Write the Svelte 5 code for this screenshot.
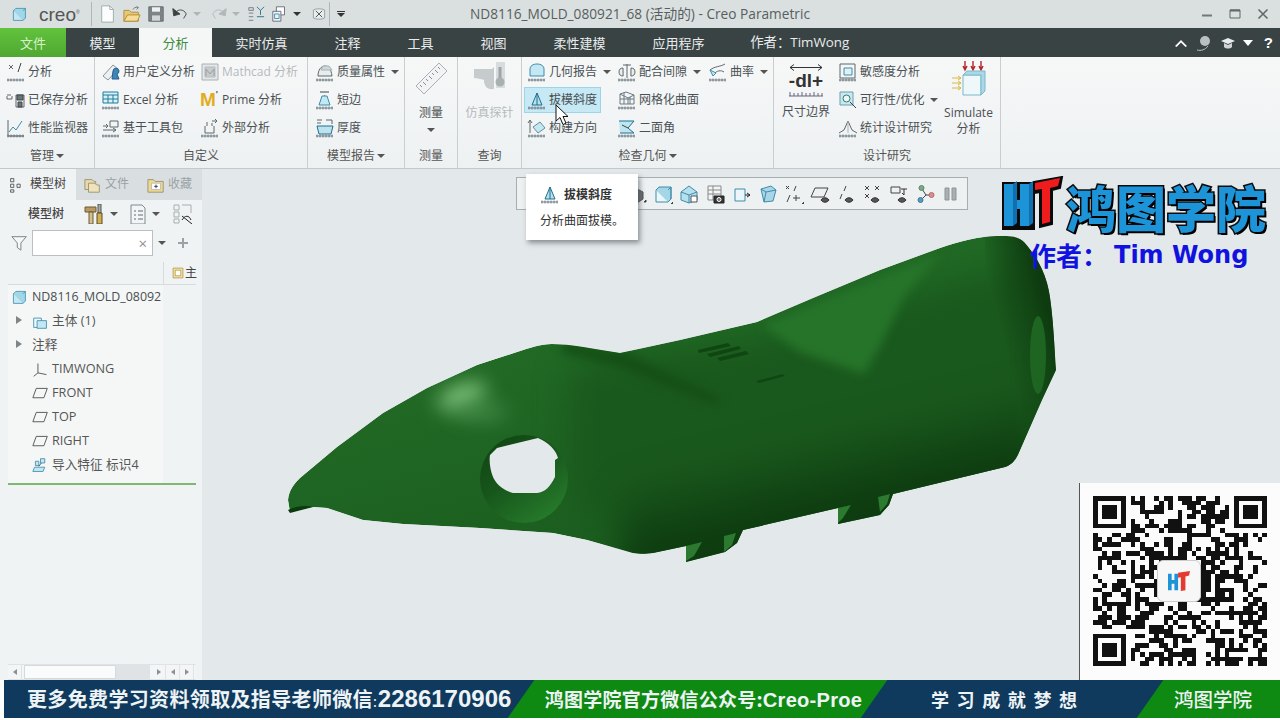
<script>
  const R = ['M1 18h17M2 16.5v3M5 16.5v3M8 16.5v3M11 16.5v3M14 16.5v3M17 16.5v3', '#6f7c82', 'none'];
  const G = '#5f676b', B = '#3f8cab', L = '#c4e8f3', D = '#3c4447';
  const icons = {
    analysis: [['M3 3l4 4M7 3l-4 4', G, 'none'], ['M15 1l-3 9', D, 'none'], R],
    saved: [['M1 6v3h5V6M2 6V4M4 6V4M10 5h8v12h-8z', G, 'none'], ['M11 5h6v5h-6zM12 12h4v5h-4z', D, '#6b7478']],
    perf: [['M2 2v16h16', G, 'none'], ['M3 14l4-5 3 3 6-9', B, 'none'], R],
    userdef: [['M2 14l10-11 5 4-10 11z', '#8b9499', '#eef1f2'], ['M12 9a3 3 0 1 1 4 3l2 5h-7z', '#235f8e', '#3f85b8']],
    mathcad: [['M2 2h16v16H2z', '#aab0b3', '#e4e7e8'], ['M5 5h10v10H5z', '#b7bcbf', '#c7cbcd'], ['M6 14V7l4 5 4-5v7', '#999fa2', 'none']],
    excel: [['M2 2h15v11H2z', '#1f7d9c', '#d8f0f6'], ['M2 5h15M7 5v8M12 5v8M2 9h15', '#1f7d9c', 'none'], R],
    toolkit: [['M9 3h8v6h-8zM2 8h5M2 12h13', G, 'none'], ['M5 6l2 2-2 2M12 10l3 2-3 2', G, 'none'], R],
    external: [['M5 8v7h9V8M7 8V4M12 8V5', G, 'none'], ['M12 3h5M15 1l2 2-2 2', G, 'none'], R],
    mass: [['M3 14c0-6 3-10 7-10s6 3 7 10z', G, '#e7ecee'], ['M8 4h6l3 4H6z', '#a8b4b9', '#cfd8db'], R],
    short: [['M5 2h9M9 6h1', D, 'none'], ['M7 6h5l3 9H4z', B, L], R],
    thick: [['M2 2h5M2 5h4M11 2h6v4', G, 'none'], ['M2 8h16l-2 8H4z', '#1f6f8f', '#bce2ee'], R],
    geo: [['M3 14V7c0-3 3-5 7-5s7 2 7 5v7z', B, L], R],
    clear: [['M6 3h8M10 2v14', G, 'none'], ['M6 6a4 4 0 1 0 .1 8zM14 6a4 4 0 1 1-.1 8z', G, '#e9eeef'], R],
    curve: [['M2 8c5-4 10-3 15-6M5 13c4-5 8-5 11-3', G, 'none'], ['M2 8l6 3-3 3z', B, L], R],
    draft: [['M10 3l5 12H5z', '#1f6f8f', '#b8dfec'], ['M10 3v12', '#1f6f8f', 'none'], R],
    mesh: [['M3 4l6-2 8 3-6 3zM3 4v10h8V8M17 5v9h-6M7 3v11M13 7v7M3 9h14', '#6b7a80', 'none'], R],
    direction: [['M3 15V3M1 5l2-3 2 3', G, 'none'], ['M6 9l7-5 5 6-7 5z', '#6a8d9a', L], R],
    dihedral: [['M2 3h15l-6 7 6 5H3', '#1f6f8f', '#bfe5f0'], ['M5 7l6 3', D, 'none'], R],
    sens: [['M2 2h15v14H2z', G, '#f4f6f6'], ['M6 6h8v7H6z', B, '#e0f0f5'], R],
    feas: [['M2 2h13v13H2z', '#6d9cad', '#c9e8f2'], ['M12 12l6 6', D, 'none'], ['M5 8.5a3.5 3.5 0 1 0 7 0a3.5 3.5 0 1 0-7 0', '#2e7f6d', '#eef6f7']],
    stat: [['M1 15l5-3 4-9 4 9 5 3', G, 'none'], ['M10 3v12', '#a9b3b7', 'none'], R],
    tree: [['M2 2h4v4H2zM2 9h4v4H2zM2 16h4v3H2zM10 9h4v4h-4z', D, 'none']],
    box: [['M3 6h12v12H3z', B, L], ['M3 6l3-3h12v12l-3 3M15 6l3-3', B, '#9fd6e8']],
    boxes: [['M2 6h9v11H2z', B, '#eef8fb'], ['M6 9h11v9H6z', B, L]],
    csys: [['M7 3v11l-5 4M7 14l10 2', '#444', 'none']],
    plane: [['M5 4h13l-4 11H1z', '#444', 'none']],
    imp: [['M10 2h5v5h-5zM4 5h4v5H4z', B, L], ['M3 12h12l-2 5H1z', B, L], ['M11 7l-3 4', D, 'none']],
    hammer: [['M3 3h11v5H3z', '#6b5a33', '#b89a62'], ['M7 8h4v12H7z', '#6b5a33', '#d6bf8c']],
    driver: [['M4 0h3v9H4z', '#555', '#aaa'], ['M3 9h5v11H3z', '#5a4a20', '#cfae55']],
    list: [['M3 1h11l3 3v16H3z', '#7f8a8f', '#f2f5f6'], ['M6 7h2M10 7h5M6 11h2M10 11h5M6 15h2M10 15h5', '#667', 'none']],
    eyeTree: [['M1 1h5v5H1zM1 8h5v5H1zM1 15h5v4H1zM9 1h9v8', '#a6adb0', 'none'], ['M9 12l10 8M9 16c3-5 7-5 9 0', '#222', 'none']],
    funnel: [['M1 3h16l-6 7v8l-4-3v-5z', '#777', '#f5f7f8']],
    folders: [['M1 4h8l2 2h2v9H1z', '#9a9076', '#e8d9a8'], ['M5 8h7l2 2h3v8H5z', '#9a9076', '#efe3bd']],
    fav: [['M1 4h6l2 2h9v12H1z', '#9a9076', '#ecd98f'], ['M5 8h10v7H5z', '#bbb', '#fff'], ['M8 11.5h4M10 9.5v4', '#333', 'none']],
    frame: [['M3 3h14v14H3z', '#a88a2c', '#f5e7ae'], ['M6 6h8v8H6z', '#a88a2c', '#fff']],
    tbDark: [['M3 8l7-3 6 3v7l-6 4-7-3z', '#555', '#6a7074'], ['M17 18h2v-2z', '#444', '#444']],
    tbBox: [['M3 6h12v12H3z', B, '#eaf6fa'], ['M3 6l3-3h12v12l-3 3M15 6l3-3v12', B, '#a5d6e6'], ['M18 20h2v-2z', '#444', '#444']],
    tbHouse: [['M2 8l8-6 8 6v8l-8 3-8-3z', B, '#b7e0ed'], ['M2 8l8 3 8-3M10 11v8', B, 'none'], ['M12 12h6v6h-6z', '#555', '#fff']],
    tbCam: [['M3 2h13v14H3zM3 6h13M3 10h13M8 2v14', '#888', '#f2f4f5'], ['M9 12h10v7H9z', '#222', '#333'], ['M12 15.5a2 2 0 1 0 4 0a2 2 0 1 0-4 0', '#fff', '#777']],
    tbOrient: [['M3 5h10v12H3z', B, '#eaf6fa'], ['M13 11h5M15 9l3 2-3 2', '#222', 'none']],
    tbCube: [['M3 5l10-3 5 4-3 11-9 1z', B, '#a9d6e6'], ['M3 5l5 3 10-2M8 8l-2 10', B, 'none']],
    tbPts: [['M2 2l3 3M5 2L2 5M12 2l-2 5M6 11l-3 7M9 14h7M12 11v6', '#444', 'none'], ['M18 20h2v-2z', '#444', '#444']],
    tbPlane: [['M5 4h13l-4 9H1z', '#444', 'none'], ['M11 16c2-3 6-3 8 0c-2 3-6 3-8 0z', '#333', '#555']],
    tbAxis: [['M10 2l-2 5M6 10l-2 5', '#444', 'none'], ['M9 16c2-3 6-3 8 0c-2 3-6 3-8 0z', '#333', '#555']],
    tbX: [['M3 2l4 4M7 2L3 6M13 2l4 4M17 2l-4 4M3 10l4 4M7 10l-4 4', '#444', 'none'], ['M9 16c2-3 6-3 8 0c-2 3-6 3-8 0z', '#333', '#555']],
    tbCsys: [['M2 3h9v6H2z', '#444', 'none'], ['M12 5h6M15 5v6l-2-2', '#333', 'none'], ['M9 16c2-3 6-3 8 0c-2 3-6 3-8 0z', '#333', '#555']],
    tbNodes: [['M7 5l4 6-5 5M11 11h6', '#444', 'none'], ['M4 4a2.5 2.5 0 1 0 5 0a2.5 2.5 0 1 0-5 0', '#5a8a6a', '#7fa98a'], ['M14 11a2.5 2.5 0 1 0 5 0a2.5 2.5 0 1 0-5 0', '#b86a6a', '#d98f8f'], ['M3 16a2.5 2.5 0 1 0 5 0a2.5 2.5 0 1 0-5 0', '#3d7a9a', '#5a9abb']],
    tbPause: [['M4 4h4v12H4zM11 4h4v12h-4z', '#8d9599', '#a9b0b4']],
    qaNew: [['M3 1h9l4 4v14H3z', '#9aa', '#fdfdfd'], ['M12 1v4h4', '#9aa', 'none']],
    qaOpen: [['M1 6h6l2 2h8v10H1z', '#b08a30', '#e8c878'], ['M5 11h14l-3 7H1z', '#b08a30', '#f4dc9a'], ['M11 5c1-2 3-3 6-2M15 1l2 2-2 2', '#777', 'none']],
    qaSave: [['M2 2h16v16H2z', '#5f686c', '#7b858a'], ['M5 2h10v6H5z', '#777', '#eef1f2'], ['M5 11h10v7H5z', '#777', '#cfd5d8']],
    qaUndo: [['M4 10c3-6 10-6 13 0l-3 5', '#3a4244', 'none'], ['M2 4l1 8 7-2z', '#3a4244', '#3a4244']],
    qaRedo: [['M16 10c-3-6-10-6-13 0l3 5', '#b1b8bb', 'none'], ['M18 4l-1 8-7-2z', '#b1b8bb', '#b1b8bb']],
    qaRegen: [['M2 3h5v3H2zM2 9h5M2 13h5M2 17h5', '#6d7a80', 'none'], ['M11 2l4 4 4-4M15 6v5M11 13h8', '#1f6f8f', 'none']],
    qaWin: [['M6 2h9v9H6z', '#667', '#fff'], ['M2 7h9v11H2z', '#667', '#eef4f6'], ['M4 10h5v5H4z', '#3f8cab', 'none']],
    qaClose: [['M3 5c3-2 11-2 14 0v10c-3 2-11 2-14 0z', '#8a9295', '#e8ecec'], ['M6 6l8 8M14 6l-8 8', '#333', 'none']]
  };

  const groups = [
    { w: 95, label: '管理', arrow: true, cols: [{ w: 94, pad: 6, items: [
      { i: 'analysis', t: '分析' }, { i: 'saved', t: '已保存分析' }, { i: 'perf', t: '性能监视器' }] }] },
    { w: 213, label: '自定义', cols: [
      { w: 100, pad: 6, items: [{ i: 'userdef', t: '用户定义分析' }, { i: 'excel', t: 'Excel 分析' }, { i: 'toolkit', t: '基于工具包' }] },
      { w: 106, pad: 5, items: [{ i: 'mathcad', t: 'Mathcad 分析', off: true }, { i: 'M', t: 'Prime 分析' }, { i: 'external', t: '外部分析' }] }] },
    { w: 97, label: '模型报告', arrow: true, cols: [{ w: 96, pad: 7, items: [
      { i: 'mass', t: '质量属性', arrow: true }, { i: 'short', t: '短边' }, { i: 'thick', t: '厚度' }] }] },
    { w: 53, label: '测量', big: 'ruler', text: ['测量'], bigArrow: true },
    { w: 64, label: '查询', big: 'probe', text: ['仿真探针'], off: true },
    { w: 252, label: '检查几何', arrow: true, cols: [
      { w: 90, pad: 5, items: [{ i: 'geo', t: '几何报告', arrow: true }, { i: 'draft', t: '拔模斜度', active: true }, { i: 'direction', t: '构建方向' }] },
      { w: 91, pad: 5, items: [{ i: 'clear', t: '配合间隙', arrow: true }, { i: 'mesh', t: '网格化曲面' }, { i: 'dihedral', t: '二面角' }] },
      { w: 66, pad: 5, items: [{ i: 'curve', t: '曲率', arrow: true }] }] },
    { w: 227, label: '设计研究', design: true }
  ];
  const designItems = [{ i: 'sens', t: '敏感度分析' }, { i: 'feas', t: '可行性/优化', arrow: true }, { i: 'stat', t: '统计设计研究' }];
  const tabs = ['模型', '分析', '实时仿真', '注释', '工具', '视图', '柔性建模', '应用程序'];
  const toolbar = ['tbDark', 'tbBox', 'tbHouse', 'tbCam', 'tbOrient', 'tbCube', 'tbPts', 'tbPlane', 'tbAxis', 'tbX', 'tbCsys', 'tbNodes', 'tbPause'];
  const tree = [
    { i: 'boxes', t: '主体 (1)', arrow: true },
    { t: '注释', arrow: true },
    { i: 'csys', t: 'TIMWONG' }, { i: 'plane', t: 'FRONT' }, { i: 'plane', t: 'TOP' }, { i: 'plane', t: 'RIGHT' },
    { i: 'imp', t: '导入特征 标识4' }
  ];

  const N = 37;
  let seed = 8116;
  const rnd = () => ((seed = (seed * 1103515245 + 12345) & 0x7fffffff) >> 12) % 100;
  function finder(x, y) { return (x >= 0 && x < 7 && y >= 0 && y < 7) ? (x === 0 || x === 6 || y === 0 || y === 6 || (x > 1 && x < 5 && y > 1 && y < 5)) : null; }
  const modules = [];
  for (let y = 0; y < N; y++) for (let x = 0; x < N; x++) {
    const inFinderZone = (x < 8 && y < 8) || (x >= N - 8 && y < 8) || (x < 8 && y >= N - 8);
    const r = rnd();
    let on = r < 52;
    if (inFinderZone) {
      on = finder(x, y) || finder(x - (N - 7), y) || finder(x, y - (N - 7)) || false;
    }
    if (on) modules.push([x, y]);
  }

  const body = 'M288 500C289 490 294 484 300 478L337 447L383 413L427 388L477 365L517 352C530 348 540 344 552 344C570 344 595 349 620 353L680 340L757 322L813 298L880 270L940 248C960 241 980 236 997 236C1010 236 1018 236 1024 242C1034 253 1043 268 1047 283C1052 300 1054 335 1056 370L1042 400L1020 450C1016 460 1012 465 1005 467L893 494L889 505L880 515L838 524V508L743 530L737 543L725 552L686 562V546L653 553C645 554 640 554 633 553L587 540L553 533L480 528L403 524L363 520L327 508L313 507L290 512Z';
  const hole = 'M497 448L538 438C548 442 556 450 558 458L555 460L555 477C550 487 545 492 537 493L513 493C503 490 496 484 493 477C490 470 489 460 490 455Z';
</script>

{#snippet icon(name, size = 20)}
  <svg class="ic" width={size} height={size} viewBox="0 0 20 20" aria-hidden="true">
    {#each icons[name] as p}
      <path d={p[0]} stroke={p[1]} fill={p[2]} stroke-width="1" />
    {/each}
  </svg>
{/snippet}

{#snippet arrow()}<span class="arr"></span>{/snippet}

{#snippet rowItem(it)}
  <div class="item" class:off={it.off} class:active={it.active}>
    {#if it.i === 'M'}
      <span class="prime">M<sup>'</sup></span>
    {:else}
      {@render icon(it.i)}
    {/if}
    <span>{it.t}</span>
    {#if it.arrow}{@render arrow()}{/if}
  </div>
{/snippet}

<div class="app">
  <header class="title">
    <div class="quick">
      <span class="cube">{@render icon('box', 16)}</span>
      <span class="creo">creo<i>®</i></span>
      <span class="qs q1"></span>
      {@render icon('qaNew', 18)}
      {@render icon('qaOpen', 18)}
      {@render icon('qaSave', 18)}
      {@render icon('qaUndo', 18)}<span class="arr dim a1"></span>
      {@render icon('qaRedo', 18)}<span class="arr dim a2"></span>
      {@render icon('qaRegen', 18)}
      {@render icon('qaWin', 18)}<span class="arr dk a3"></span>
      {@render icon('qaClose', 16)}
      <span class="qs q2"></span>
      <span class="custom"><b></b><span class="arr dk"></span></span>
    </div>
    <div class="wintitle">ND8116_MOLD_080921_68 (活动的) - Creo Parametric</div>
    <div class="winbtns">
      <svg width="14" height="14" viewBox="0 0 14 14"><path d="M2 8.5h10" stroke="#777" stroke-width="2" /></svg>
      <svg width="14" height="14" viewBox="0 0 14 14"><path d="M2 3h10v8H2z" stroke="#666" fill="none" /><path d="M2 3.5h10" stroke="#666" stroke-width="2" /></svg>
      <svg width="14" height="14" viewBox="0 0 14 14"><path d="M2.5 2.5l9 9M11.5 2.5l-9 9" stroke="#666" stroke-width="1.6" /></svg>
    </div>
  </header>

  <nav class="tabs">
    <div class="tab file">文件</div>
    {#each tabs as t}
      <div class="tab" class:on={t === '分析'}>{t}</div>
    {/each}
    <div class="author">作者：TimWong</div>
    <div class="tabtools">
      <svg width="14" height="10" viewBox="0 0 14 10"><path d="M1 8l6-6 6 6-1.5 1L7 4.500 2.500 9z" fill="#fff" /></svg>
      <svg width="18" height="18" viewBox="0 0 18 18"><circle cx="10" cy="7" r="5" fill="#b9c0c2" /><path d="M2 16c4 1 8 0 11-4" stroke="#b9c0c2" fill="none" /></svg>
      <svg width="16" height="14" viewBox="0 0 16 14"><path d="M1 5l7-3 7 3-7 3z" fill="#e8ecec" /><path d="M4 7v4c2 2 6 2 8 0V7l-4 2z" fill="#cfd5d5" /></svg>
      <svg width="10" height="8" viewBox="0 0 10 8"><path d="M0 1h10L5 7z" fill="#fff" /></svg>
      <span class="help">?</span>
    </div>
  </nav>

  <section class="ribbon">
    {#each groups as g}
      <div class="group" style:width="{g.w}px">
        <div class="gbody">
          {#if g.cols}
            {#each g.cols as c}
              <div class="col" style:width="{c.w}px" style:padding-left="{c.pad}px">
                {#each c.items as it}{@render rowItem(it)}{/each}
              </div>
            {/each}
          {:else if g.big}
            <div class="bigcol" class:off={g.off}>
              {#if g.big === 'ruler'}
                <svg width="36" height="36" viewBox="0 0 36 36" aria-hidden="true">
                  <path d="M3 25L26 2l8 8L11 33z" fill="#f1f3f4" stroke="#aab1b4" />
                  <path d="M7 24l2 2M10 21l3 3M13 18l2 2M16 15l3 3M19 12l2 2M22 9l3 3M25 6l2 2" stroke="#889296" fill="none" />
                </svg>
              {:else}
                <svg width="36" height="36" viewBox="0 0 36 36" aria-hidden="true">
                  <path d="M2 8h18l2-2v22c-7 1-10-3-10-9-3-1-7-2-10-2z" fill="#c6cbcd" />
                  <path d="M24 1h9v26h-9z" fill="#d8dcdd" />
                  <path d="M28 6v12" stroke="#9ea5a8" stroke-width="3" />
                  <circle cx="28" cy="21" r="4.5" fill="#a9b0b2" />
                </svg>
              {/if}
              <span class="bigtext">{g.text[0]}</span>
              {#if g.bigArrow}{@render arrow()}{/if}
            </div>
          {:else if g.design}
            <div class="dl">
              <div class="dlicon">
                <svg width="36" height="9" viewBox="0 0 36 9"><path d="M2 4.500h32M6 1.500L2 4.500l4 3M30 1.500l4 3-4 3" stroke="#333" fill="none" /></svg>
                <b>-dl+</b>
                <svg width="36" height="7" viewBox="0 0 36 7"><path d="M1 6h34M2 2v4M6 3v3M10 3v3M14 2v4M18 3v3M22 3v3M26 2v4M30 3v3M34 3v3" stroke="#667" fill="none" /></svg>
              </div>
              <span>尺寸边界</span>
            </div>
            <div class="col dcol">
              {#each designItems as it}{@render rowItem(it)}{/each}
            </div>
            <div class="sim">
              <svg width="36" height="36" viewBox="0 0 36 36" aria-hidden="true">
                <path d="M14 0v8M22 0v8M30 0v8M12 5l2 4 2-4M20 5l2 4 2-4M28 5l2 4 2-4" stroke="#b3262a" fill="none" stroke-width="1.4" />
                <path d="M12 14h18v20H12z" fill="#eef8fb" stroke="#7fb7c9" />
                <path d="M12 14l4-4h18v20l-4 4V14z" fill="#a9d8e8" stroke="#7fb7c9" />
                <path d="M1 17h9M1 22h9M1 27h9M7 15l3 2-3 2M7 20l3 2-3 2M7 25l3 2-3 2" stroke="#d9b83a" fill="none" />
              </svg>
              <span>Simulate</span>
              <span>分析</span>
            </div>
          {/if}
        </div>
        <div class="glabel">{g.label}{#if g.arrow}{@render arrow()}{/if}</div>
      </div>
    {/each}
  </section>

  <main class="main">
    <aside class="side">
      <div class="stabs">
        <div class="stab on">{@render icon('tree', 16)}<span>模型树</span></div>
        <div class="stab two">{@render icon('folders', 18)}<span>文件</span></div>
        <div class="stab three">{@render icon('fav', 18)}<span>收藏</span></div>
      </div>
      <div class="stool">
        <b>模型树</b>
        <span class="tools">{@render icon('hammer', 20)}</span>
        <span class="driver">{@render icon('driver', 20)}</span>
        <span class="arr ga"></span>
        <span class="lst">{@render icon('list', 20)}</span>
        <span class="arr gb"></span>
        <span class="eye">{@render icon('eyeTree', 20)}</span>
      </div>
      <div class="sfilter">
        {@render icon('funnel', 18)}
        <div class="input"><span>×</span></div>
        <span class="arr"></span>
        <svg width="12" height="12" viewBox="0 0 12 12"><path d="M6 1v10M1 6h10" stroke="#9aa2a6" stroke-width="2" /></svg>
      </div>
      <div class="shead"><div class="hcell">{@render icon('frame', 14)}<span>主</span></div></div>
      <div class="treewrap">
        <div class="trow root">{@render icon('box', 16)}<span class="rootname">ND8116_MOLD_08092</span></div>
        {#each tree as n}
          <div class="trow">
            <span class="exp">{#if n.arrow}<i></i>{/if}</span>
            {#if n.i}{@render icon(n.i, 17)}{/if}
            <span>{n.t}</span>
          </div>
        {/each}
      </div>
      <div class="sline"></div>
      <div class="sspace"></div>
      <div class="scroll">
        <div class="sbtn l"></div>
        <div class="thumb"></div>
        <div class="track"></div>
        <div class="sbtn r"></div>
        <div class="sbtn l"></div>
        <div class="sbtn r"></div>
      </div>
    </aside>

    <div class="canvas">
      <svg class="model" viewBox="202 169 1078 511" width="1078" height="511" aria-label="3D 模型">
        <defs>
          <clipPath id="bodyclip"><path d={body} /></clipPath>
          <linearGradient id="base" gradientUnits="userSpaceOnUse" x1="400" y1="330" x2="460" y2="560">
            <stop offset="0" stop-color="#226c26" />
            <stop offset="1" stop-color="#1c5f20" />
          </linearGradient>
          <linearGradient id="under" gradientUnits="userSpaceOnUse" x1="788" y1="440" x2="806" y2="515">
            <stop offset="0" stop-color="#0d3a0f" stop-opacity="0" />
            <stop offset="1" stop-color="#0d3a0f" stop-opacity="0.95" />
          </linearGradient>
          <linearGradient id="endg" gradientUnits="userSpaceOnUse" x1="1000" y1="330" x2="1048" y2="318">
            <stop offset="0" stop-color="#0e3c10" stop-opacity="0" />
            <stop offset="1" stop-color="#0e3c10" stop-opacity="1" />
          </linearGradient>
          <linearGradient id="rim" x1="0" y1="0" x2="0.7" y2="1">
            <stop offset="0" stop-color="#0f4212" />
            <stop offset="0.5" stop-color="#17561b" />
            <stop offset="1" stop-color="#267a2b" />
          </linearGradient>
          <filter id="b3" x="-50%" y="-50%" width="200%" height="200%" color-interpolation-filters="sRGB"><feGaussianBlur stdDeviation="5" /></filter>
          <filter id="b8" x="-100%" y="-100%" width="300%" height="300%" color-interpolation-filters="sRGB"><feGaussianBlur stdDeviation="10" /></filter>
          <filter id="b14" x="-40%" y="-40%" width="180%" height="180%" color-interpolation-filters="sRGB"><feGaussianBlur stdDeviation="16" /></filter>
        </defs>
        <g clip-path="url(#bodyclip)">
          <path d={body} fill="url(#base)" />
          <path d="M570 370L760 340L1040 260V480L660 560L570 500z" fill="#1a591d" filter="url(#b14)" />
          <path d="M762 325L942 252L905 295L878 350L864 374L800 352z" fill="#26742a" filter="url(#b3)" />
          <path d="M620 360H1040V620H620z" fill="url(#under)" filter="url(#b14)" />
          <path d="M985 210H1090V500H985z" fill="url(#endg)" />
          <path d="M565 342L625 352L722 398L715 406L620 368L560 352z" fill="#155016" filter="url(#b3)" />
          <ellipse cx="462" cy="396" rx="26" ry="10" fill="#8ed08a" filter="url(#b8)" transform="rotate(-20 462 396)" />
          <ellipse cx="480" cy="412" rx="28" ry="9" fill="#4a9450" filter="url(#b8)" opacity="0.8" />
        </g>
        <circle cx="524" cy="479" r="44" fill="url(#rim)" />
        <path d={hole} fill="#e3e8ea" />
        <ellipse cx="1038" cy="355" rx="8" ry="39" fill="#1f6522" />
        <path d="M698 350l30-7 3 3-32 7zM707 354l32-8 2 3-31 8zM717 358l29-7 3 3-29 7zM756 381l27-7 2 2-26 7z" fill="#0f4612" />
        <path d="M686 546l16-4-8 14-8 5zM724 536l12-3-4 12-8 7zM838 508l13-3-8 13-5 5zM878 497l12-3-3 10-7 8z" fill="#2b7a30" />
        <path d="M288 510c8-4 18-5 25-3l-23 6z" fill="#0c3a0e" />
      </svg>

      <div class="floatbar">
        {#each toolbar as t}<span class="fbi">{@render icon(t, 20)}</span>{/each}
      </div>

      <div class="tip">
        <div class="tiphead">{@render icon('draft', 20)}<b>拔模斜度</b></div>
        <div class="tipbody">分析曲面拔模。</div>
      </div>

      <div class="brand">
        <svg class="ht" width="62" height="60" viewBox="0 0 62 60" aria-label="HT">
          <path d="M1 7h15v46H1zM17 7h15v46H17zM12 24h10v12H12z" fill="#0a0a0a" stroke="#0a0a0a" stroke-width="2" />
          <path d="M2 8h9v42H2z" fill="#1d93d8" /><path d="M11 8l4-3v42l-4 3z" fill="#0f6fb0" />
          <path d="M18 8h9v42h-9z" fill="#1d93d8" /><path d="M27 8l4-3v42l-4 3z" fill="#0f6fb0" />
          <path d="M15 24h3v9h-3z" fill="#1d93d8" />
          <path d="M32 6l28-5-2 11-8 2v34l-12 3V16l-6 1z" fill="#0a0a0a" stroke="#0a0a0a" stroke-width="2" />
          <path d="M33 7l25-5-2 8-8 2v34l-8 2V13l-7 1z" fill="#ee1c1c" />
        </svg>
        <span class="brandname">鸿图学院</span>
      </div>
      <div class="byline">作者：<span>Tim Wong</span></div>

      <div class="qr">
        <svg width="174" height="170" viewBox="0 0 37 37" preserveAspectRatio="none" shape-rendering="crispEdges" aria-label="二维码">
          {#each modules as m}<rect x={m[0]} y={m[1]} width="1" height="1" fill="#111" />{/each}
        </svg>
        <div class="qrlogo">
          <svg width="24" height="22" viewBox="0 0 26 24" aria-label="HT">
            <path d="M1 4h4v18H1zM8 4h4v18H8zM4 11h5v4H4z" fill="#1d93d8" />
            <path d="M12 3l13-2-1 5-4 1v15l-5 1V8l-3 .5z" fill="#e43a30" />
          </svg>
        </div>
      </div>
    </div>
  </main>

  <footer class="banner">
    <div class="b1">更多免费学习资料领取及指导老师微信<em>:</em><span>2286170906</span></div>
    <div class="b2"><div>鸿图学院官方微信公众号:<span>Creo-Proe</span></div></div>
    <div class="b3">学习成就梦想</div>
    <div class="b4"><div>鸿图学院</div></div>
  </footer>
  <div class="foot"></div>

  <svg class="cursor" width="14" height="22" viewBox="0 0 14 22" aria-hidden="true">
    <path d="M1 1v16l4-3.5 3 7 3-1.3-3-6.7h5z" fill="#fff" stroke="#111" />
  </svg>
</div>

<style>
  :global(body) { margin: 0; background: #fff; }
  .app {
    position: relative; width: 1280px; height: 720px; overflow: hidden;
    display: flex; flex-direction: column;
    font: 12px/1.2 "Open Sans", "Noto Sans CJK SC", sans-serif; color: #4a5053;
  }
  .ic { display: block; flex: none; }
  .arr { display: inline-block; width: 0; height: 0; border: 4px solid transparent; border-top: 4px solid #555; border-bottom: 0; flex: none; }
  .arr.dim { border-top-color: #aeb5b8; }
  .arr.dk { border-top-color: #333; }

  .title { height: 28px; flex: none; background: #d9e0df; display: grid; grid-template-columns: 1fr auto 1fr; align-items: center; }
  .quick { display: flex; align-items: center; }
  .cube { margin-left: 11px; }
  .creo { margin-left: 6px; font: 19px/1 "Liberation Sans", sans-serif; color: #555; width: 52px; }
  .creo i { font-size: 5px; vertical-align: super; font-style: normal; }
  .qs { width: 1px; height: 24px; background: #aeb6b6; }
  .q1 { margin-right: 7px; }
  .q2 { margin: 0 7px 0 -4px; }
  .quick :global(svg) { margin-right: 6px; }
  .quick .a1 { margin: 0 9px 0 -2px; }
  .quick .a2 { margin: 0 7px 0 -2px; }
  .quick .a3 { margin: 0 10px 0 -2px; }
  .custom { display: flex; flex-direction: column; align-items: center; }
  .custom b { width: 8px; height: 1px; background: #333; margin-bottom: 1px; }
  .wintitle { font-size: 13.7px; color: #585e60; white-space: nowrap; }
  .winbtns { display: flex; justify-content: flex-end; gap: 14px; padding-right: 10px; }

  .tabs { height: 29px; flex: none; background: #3a4344; display: flex; align-items: stretch; color: #e8ecec; font-size: 13px; font-family: "Noto Sans CJK SC", sans-serif; }
  .tab { padding: 0 23.5px; display: flex; align-items: center; }
  .tab.file { width: 66px; box-sizing: border-box; padding: 0; justify-content: center; background: linear-gradient(#62c23c, #4fa832); color: #d6f3c8; }
  .tab.on { background: #f5f7f7; color: #3f8a3f; }
  .author { margin-left: 22px; display: flex; align-items: center; font-family: "Open Sans", "Noto Sans CJK SC", sans-serif; font-size: 13.4px; }
  .tabtools { margin-left: auto; padding-right: 7px; display: flex; align-items: center; gap: 7px; }
  .help { color: #fff; font: bold 15px "Liberation Sans", sans-serif; margin-left: 4px; }

  .ribbon { height: 112px; flex: none; background: linear-gradient(#f6f8f8, #eef1f2); border-bottom: 1px solid #c3c9cb; box-sizing: border-box; display: flex; }
  .group { display: flex; flex-direction: column; border-right: 1px solid #c9cecf; box-sizing: border-box; flex: none; }
  .gbody { height: 87px; flex: none; display: flex; }
  .glabel { flex: 1; display: flex; align-items: center; justify-content: center; gap: 2px; color: #555; }
  .col { display: flex; flex-direction: column; box-sizing: border-box; padding-top: 0; }
  .item { height: 28px; flex: none; display: flex; align-items: center; gap: 2px; white-space: nowrap; position: relative; top: 1px; }
  .item .arr { margin-left: 4px; }
  .item.off { color: #b5babc; }
  .item.active { background: #c6e9f5; outline: 1px solid #9ad5e8; margin: 2px 0 2px -2px; height: 24px; padding-left: 2px; width: 73px; }
  .prime { width: 20px; font: bold 19px/20px "Liberation Sans", sans-serif; color: #e3ab22; display: flex; }
  .prime sup { font-size: 9px; line-height: 8px; color: #555; }
  .bigcol { width: 100%; display: flex; flex-direction: column; align-items: center; padding-top: 4px; }
  .bigcol .bigtext { margin-top: 9px; margin-bottom: 8px; }
  .bigcol.off { color: #b5babc; }
  .dl { width: 64px; flex: none; display: flex; flex-direction: column; align-items: center; padding: 6px 0 0 0; box-sizing: border-box; }
  .dlicon { display: flex; flex-direction: column; align-items: center; height: 37px; margin-bottom: 5px; }
  .dlicon b { font: bold 19px/18px "Liberation Sans", sans-serif; color: #333; }
  .dcol { width: 99px; flex: none; }
  .sim { flex: 1; display: flex; flex-direction: column; align-items: center; padding-top: 4px; line-height: 16px; }
  .sim svg { margin-bottom: 8px; }

  .main { flex: 1; min-height: 0; display: flex; }
  .side { width: 202px; flex: none; background: #f0f3f4; display: flex; flex-direction: column; box-sizing: border-box; }
  .stabs { height: 31px; flex: none; display: flex; background: #d9dfe1; }
  .stab { display: flex; align-items: center; gap: 3px; color: #9ba2a5; }
  .stab.on { width: 76px; background: #f0f3f4; padding-left: 9px; box-sizing: border-box; color: #444; gap: 5px; }
  .stab.two { width: 62px; padding-left: 8px; box-sizing: border-box; }
  .stab.three { padding-left: 9px; }
  .stool { height: 28px; flex: none; display: flex; align-items: center; padding-left: 28px; color: #444; }
  .stool b { font-weight: 500; width: 54px; }
  .tools { width: 12px; }
  .driver { width: 16px; }
  .ga { margin-right: 10px; }
  .lst { width: 24px; }
  .gb { margin-right: 13px; }
  .sfilter { height: 29px; flex: none; display: flex; align-items: center; padding-left: 11px; }
  .input { width: 121px; height: 26px; margin-left: 3px; background: #fff; border: 1px solid #b9bfc2; display: flex; align-items: center; justify-content: flex-end; padding-right: 5px; color: #8a9194; font-size: 15px; box-sizing: border-box; }
  .sfilter .arr { margin: 0 11px 0 5px; }
  .shead { height: 28px; flex: none; margin-left: 8px; width: 188px; border-bottom: 1px solid #d6dbdd; box-sizing: border-box; display: flex; justify-content: flex-end; align-items: flex-end; }
  .hcell { width: 33px; height: 22px; border-left: 1px solid #d6dbdd; box-sizing: border-box; display: flex; align-items: center; padding-left: 7px; color: #444; }
  .treewrap { flex: none; margin-left: 8px; width: 155px; overflow: hidden; background: #f5f7f7; padding-bottom: 6px; }
  .trow { height: 24px; display: flex; align-items: center; gap: 3px; white-space: nowrap; font-size: 12.7px; color: #555; }
  .trow.root { padding-left: 3px; gap: 5px; }
  .rootname { color: #484e51; font-size: 12.4px; }
  .exp { width: 21px; height: 10px; padding-left: 8px; box-sizing: border-box; flex: none; }
  .exp i { display: block; width: 0; height: 0; border: 4.5px solid transparent; border-left: 6px solid #7d8588; border-right: 0; }
  .sline { flex: none; height: 2px; margin-left: 8px; width: 188px; background: #7fb873; }
  .sspace { flex: 1; }
  .scroll { flex: none; height: 16px; margin-left: 8px; width: 188px; display: flex; background: #f3f5f6; border: 1px solid #dfe3e5; border-width: 1px 0; box-sizing: border-box; }
  .sbtn { width: 14px; display: flex; align-items: center; justify-content: center; border-right: 1px solid #dfe3e5; box-sizing: border-box; }
  .sbtn::after { content: ""; border: 3.5px solid transparent; }
  .sbtn.l::after { border-right: 4px solid #8a9194; border-left: 0; }
  .sbtn.r::after { border-left: 4px solid #8a9194; border-right: 0; }
  .thumb { width: 92px; background: #fafbfb; border: 1px solid #d5dadc; box-sizing: border-box; margin-left: 2px; }
  .track { width: 34px; background: #dfe3e5; margin-right: 2px; }

  .canvas { position: relative; flex: 1; background: #e3e8ea; overflow: hidden; }
  .model { position: absolute; left: 0; top: 0; display: block; }
  .floatbar { position: absolute; left: 314px; top: 8px; width: 452px; height: 33px; box-sizing: border-box; border: 1px solid #a8adaf; background: #eef1f2; display: flex; align-items: center; justify-content: flex-end; gap: 6.2px; padding-right: 6px; }
  .fbi { display: block; }
  .tip { position: absolute; left: 324px; top: 5px; width: 112px; height: 66px; box-sizing: border-box; background: #fff; box-shadow: 2px 3px 5px rgba(60, 70, 75, .55); padding: 10px 0 0 14px; color: #333; font-family: "Noto Sans CJK SC", sans-serif; }
  .tiphead { display: flex; align-items: center; gap: 3px; height: 20px; }
  .tiphead b { font-weight: 700; margin-left: 1px; }
  .tipbody { margin-top: 9px; }
  .brand { position: absolute; left: 800px; top: 7px; display: flex; align-items: center; }
  .brandname { margin-left: 2px; font: 900 50px/1 "Noto Sans CJK SC", sans-serif; color: #1d93d8; -webkit-text-stroke: 3px #0b0b0b; paint-order: stroke fill; text-shadow: 2px 2px 0 #000; letter-spacing: 0; }
  .byline { position: absolute; left: 828px; top: 70px; font: bold 26px/1.2 "Noto Sans CJK SC", sans-serif; color: #1212e0; white-space: nowrap; display: flex; align-items: center; }
  .byline span { font: bold 24px/1.2 "DejaVu Sans", sans-serif; margin-left: 6px; position: relative; top: 1px; }
  .qr { position: absolute; left: 877px; top: 314px; width: 203px; height: 197px; box-sizing: border-box; background: #fcfcfc; border-left: 1px solid #555; padding: 13px 0 0 13px; }
  .qr svg { display: block; }
  .qrlogo { position: absolute; left: 77px; top: 77px; width: 44px; height: 42px; background: #f7f7f7; border: 1px solid #ccc; border-radius: 6px; display: flex; align-items: center; justify-content: center; box-sizing: border-box; }

  .banner { height: 38px; flex: none; margin-left: 4px; background: #0f3a5e; display: flex; overflow: hidden; color: #eef3f5; font: bold 20px/38px "Noto Sans CJK SC", sans-serif; white-space: nowrap; }
  .foot { height: 2px; flex: none; }
  .b1 { width: 517px; flex: none; padding-left: 23px; box-sizing: border-box; letter-spacing: .35px; }
  .b1 em { font-style: normal; font-size: 14px; letter-spacing: 0; font-weight: 400; margin-right: 1px; }
  .b1 span { font: bold 24px/38px "Liberation Sans", sans-serif; letter-spacing: 0; }
  .b2 { width: 353px; flex: none; box-sizing: border-box; background: #0e8a12; transform: skewX(-35deg); padding-left: 24px; }
  .b2 > div, .b4 > div { transform: skewX(35deg); }
  .b2 span { font: bold 20.1px/38px "Liberation Sans", sans-serif; }
  .b2 > div { font-size: 19px; letter-spacing: .25px; }
  .b3 { width: 276px; flex: none; box-sizing: border-box; padding-left: 57px; font-size: 18px; letter-spacing: 7.6px; }
  .b4 { width: 200px; flex: none; background: #0e8a12; transform: skewX(-35deg); padding-left: 24px; box-sizing: border-box; font-weight: 500; font-size: 19.5px; }

  .cursor { position: absolute; left: 555px; top: 104px; }
</style>
